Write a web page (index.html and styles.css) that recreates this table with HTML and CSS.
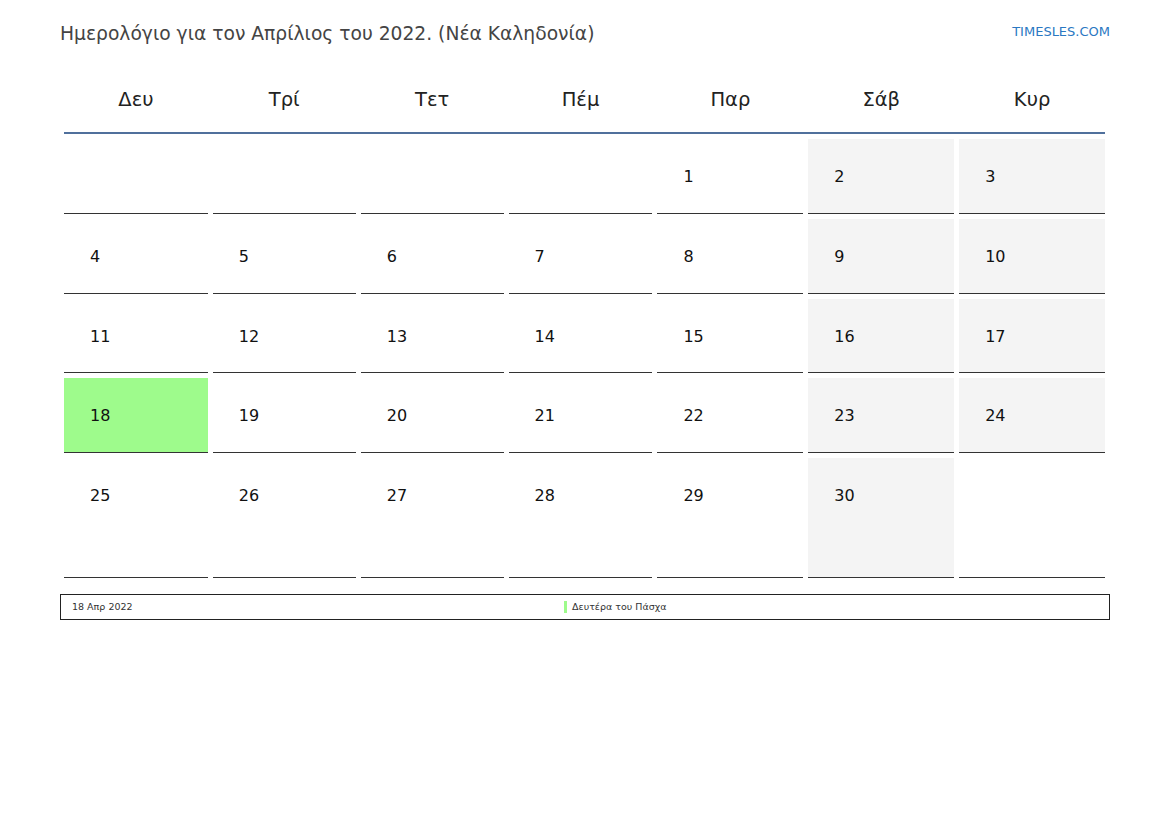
FILE: index.html
```html
<!DOCTYPE html>
<html lang="el">
<head>
<meta charset="utf-8">
<title>Ημερολόγιο Απρίλιος 2022</title>
<link rel="stylesheet" href="styles.css">
</head>
<body>
<div class="page">
  <div class="top">
    <h1 class="title">Ημερολόγιο για τον Απρίλιος του 2022. (Νέα Καληδονία)</h1>
    <a class="brand">TIMESLES.COM</a>
  </div>
  <div class="cal">
    <div class="weekdays">
      <div>Δευ</div><div>Τρί</div><div>Τετ</div><div>Πέμ</div><div>Παρ</div><div>Σάβ</div><div>Κυρ</div>
    </div>
    <div class="weeks">
      <div class="day"></div><div class="day"></div><div class="day"></div><div class="day"></div><div class="day">1</div><div class="day we">2</div><div class="day we">3</div>
      <div class="day">4</div><div class="day">5</div><div class="day">6</div><div class="day">7</div><div class="day">8</div><div class="day we">9</div><div class="day we">10</div>
      <div class="day">11</div><div class="day">12</div><div class="day">13</div><div class="day">14</div><div class="day">15</div><div class="day we">16</div><div class="day we">17</div>
      <div class="day hol">18</div><div class="day">19</div><div class="day">20</div><div class="day">21</div><div class="day">22</div><div class="day we">23</div><div class="day we">24</div>
      <div class="day tall">25</div><div class="day tall">26</div><div class="day tall">27</div><div class="day tall">28</div><div class="day tall">29</div><div class="day tall we">30</div><div class="day tall"></div>
    </div>
  </div>
  <div class="legend">
    <div class="ldate">18 Απρ 2022</div>
    <div class="lname"><span class="mark"></span>Δευτέρα του Πάσχα</div>
  </div>
</div>
</body>
</html>
```
FILE: styles.css
```css
* { box-sizing: border-box; }
body {
  margin: 0;
  background: #fff;
  font-family: "DejaVu Sans", sans-serif;
  color: #111;
}
.page {
  width: 1169px;
  padding: 20px 59px 0 59px;
}
.top {
  display: flex;
  justify-content: space-between;
  align-items: flex-start;
  height: 44px;
}
.title {
  margin: 1px 0 0 1px;
  font-size: 18.7px;
  font-weight: normal;
  color: #444;
  line-height: 26px;
}
.brand {
  font-size: 13px;
  color: #2a78c2;
  line-height: 24px;
}
.cal {
  padding: 0 5px;
}
.weekdays,
.weeks {
  display: grid;
  grid-template-columns: 144fr 143fr 143fr 144fr 146fr 146fr 146fr;
  column-gap: 5px;
}
.weekdays {
  border-bottom: 2px solid #50709c;
  height: 70px;
  align-items: center;
  padding-top: 2px;
}
.weekdays div {
  text-align: center;
  font-size: 19.5px;
  color: #222;
}
.weeks {
  row-gap: 5px;
  padding-top: 5px;
}
.day {
  height: 74.8px;
  border-bottom: 1px solid #333;
  padding: 28px 0 0 26px;
  font-size: 16px;
  line-height: 20px;
  color: #111;
}
.day.tall { height: 120px; }
.we { background: #f4f4f4; }
.hol { background: #9efb8c; }
.legend {
  margin: 16px 0 0 1px;
  width: 1050px;
  height: 26px;
  border: 1px solid #222;
  display: flex;
  align-items: center;
  font-size: 9.5px;
  color: #333;
  padding: 0 0 1px 11px;
}
.ldate { width: 492px; }
.lname { display: flex; align-items: center; }
.mark {
  display: inline-block;
  width: 3px;
  height: 12px;
  background: #9efb8c;
  margin-right: 5px;
}
```
